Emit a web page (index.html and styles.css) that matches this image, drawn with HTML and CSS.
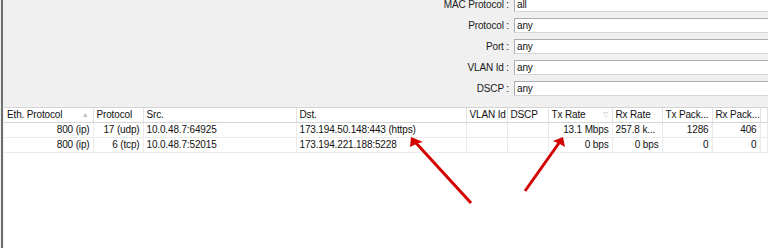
FILE: index.html
```html
<!DOCTYPE html>
<html lang="en">
<head>
    <meta charset="UTF-8">
    <meta name="viewport" content="width=device-width, initial-scale=1.0">
    <title>Torch</title>
    <link rel="stylesheet" href="styles.css">
</head>
<body>
    <div class="window">
        <form class="filter">
            <label>MAC Protocol :</label><div class="field">all</div>
            <label>Protocol :</label><div class="field">any</div>
            <label>Port :</label><div class="field">any</div>
            <label>VLAN Id :</label><div class="field">any</div>
            <label>DSCP :</label><div class="field">any</div>
        </form>

        <div class="list">
            <table class="conn">
                <colgroup>
                    <col style="width: 89px">
                    <col style="width: 50px">
                    <col style="width: 153px">
                    <col style="width: 170px">
                    <col style="width: 41px">
                    <col style="width: 41px">
                    <col style="width: 64px">
                    <col style="width: 50px">
                    <col style="width: 50px">
                    <col style="width: 48px">
                    <col>
                </colgroup>
                <thead>
                    <tr>
                        <th>Eth. Protocol <span class="sort">&#9650;</span></th>
                        <th>Protocol</th>
                        <th>Src.</th>
                        <th>Dst.</th>
                        <th>VLAN Id</th>
                        <th>DSCP</th>
                        <th>Tx Rate <span class="sort">&#9661;</span></th>
                        <th>Rx Rate</th>
                        <th>Tx Pack...</th>
                        <th>Rx Pack...</th>
                        <th></th>
                    </tr>
                </thead>
                <tbody>
                    <tr>
                        <td class="num">800 (ip)</td>
                        <td class="num">17 (udp)</td>
                        <td>10.0.48.7:64925</td>
                        <td>173.194.50.148:443 (https)</td>
                        <td></td>
                        <td></td>
                        <td class="num">13.1 Mbps</td>
                        <td>257.8 k...</td>
                        <td class="num">1286</td>
                        <td class="num">406</td>
                        <td></td>
                    </tr>
                    <tr>
                        <td class="num">800 (ip)</td>
                        <td class="num">6 (tcp)</td>
                        <td>10.0.48.7:52015</td>
                        <td>173.194.221.188:5228</td>
                        <td></td>
                        <td></td>
                        <td class="num">0 bps</td>
                        <td class="num">0 bps</td>
                        <td class="num">0</td>
                        <td class="num">0</td>
                        <td></td>
                    </tr>
                </tbody>
            </table>
        </div>

        <!-- annotation arrows -->
        <svg class="arrows" width="768" height="248" viewBox="0 0 768 248">
            <line x1="471" y1="203" x2="416" y2="143" />
            <polygon points="411,137 423,142 417,143.5 410,147" />
            <line x1="525" y1="191" x2="559" y2="143" />
            <polygon points="563,137 565,147 559,143.5 553,141" />
        </svg>
    </div>
</body>
</html>
```

FILE: styles.css
```css
body {
    margin: 0;
    background-color: #f0f0f0;
    font-family: 'Liberation Sans', Arial, sans-serif;
    font-size: 10px;
    letter-spacing: -0.15px;
    color: #111;
    overflow: hidden;
}

.window {
    position: relative;
    height: 248px;
    margin-left: 1px;
    border-left: 2px solid #6e6e6e;
    display: flex;
    flex-direction: column;
    overflow: hidden;
}

.filter {
    display: grid;
    grid-template-columns: 508px 1fr;
    grid-auto-rows: 15px;
    column-gap: 3px;
    row-gap: 6px;
    margin-top: -3px;
}

.filter label {
    text-align: right;
    padding-right: 2px;
    line-height: 16px;
    color: #1a1a1a;
}

.field {
    background-color: #fff;
    border: 1px solid #abadb3;
    border-bottom-color: #d6d6d6;
    padding-left: 2px;
    line-height: 14px;
    margin-right: -6px;
}

.list {
    flex: 1;
    margin-top: 11px;
    margin-left: 1px;
    background-color: #fff;
    border-top: 1px solid #d5d5d5;
}

.conn {
    width: 100%;
    table-layout: fixed;
    border-collapse: collapse;
}

.conn th,
.conn td {
    padding: 0 3px;
    white-space: nowrap;
    overflow: hidden;
    text-align: left;
}

.conn th {
    height: 14px;
    font-weight: normal;
    border-right: 1px solid #e3e3e3;
    border-bottom: 1px solid #d5d5d5;
    line-height: 14px;
}

.conn td {
    height: 14px;
    line-height: 14px;
    border-right: 1px solid #ebebeb;
    border-bottom: 1px solid #ebebeb;
}

.conn td.num {
    text-align: right;
}

.sort {
    float: right;
    font-size: 7px;
    color: #c0c0c0;
    margin-right: 1px;
}

.arrows {
    position: absolute;
    top: 0;
    left: -3px;
    pointer-events: none;
}

.arrows line {
    stroke: #d40000;
    stroke-width: 3;
}

.arrows polygon {
    fill: #d40000;
}
```
